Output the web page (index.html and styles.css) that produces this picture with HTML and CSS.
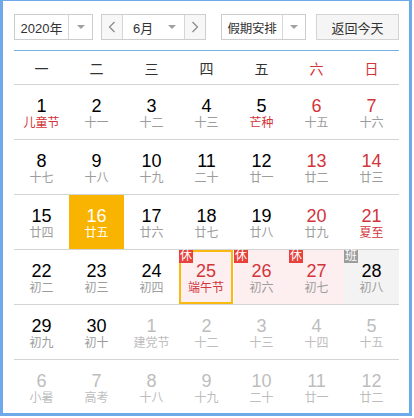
FILE: index.html
```html
<!DOCTYPE html>
<html lang="zh-CN">
<head>
<meta charset="utf-8">
<title>万年历</title>
<link rel="stylesheet" href="styles.css">
</head>
<body>
<div class="cal">
  <div class="toolbar">
    <div class="sel sel-year">
      <span class="sel-text">2020年</span>
      <span class="sel-arrow"><i class="tri"></i></span>
    </div>
    <div class="sel sel-month">
      <span class="nav"><svg width="8" height="12" viewBox="0 0 8 12"><path d="M6.5 1 L1.5 6 L6.5 11" fill="none" stroke="#888" stroke-width="1.2"/></svg></span>
      <span class="month-mid"><span class="month-text">6月</span><i class="tri"></i></span>
      <span class="nav nav-next"><svg width="8" height="12" viewBox="0 0 8 12"><path d="M1.5 1 L6.5 6 L1.5 11" fill="none" stroke="#888" stroke-width="1.2"/></svg></span>
    </div>
    <div class="sel sel-holiday">
      <span class="sel-text">假期安排</span>
      <span class="sel-arrow"><i class="tri"></i></span>
    </div>
    <div class="btn-today">返回今天</div>
  </div>

  <div class="head">
    <span>一</span><span>二</span><span>三</span><span>四</span><span>五</span><span class="red">六</span><span class="red">日</span>
  </div>

  <div class="week">
    <div class="cell"><b>1</b><em class="red">儿童节</em></div>
    <div class="cell"><b>2</b><em>十一</em></div>
    <div class="cell"><b>3</b><em>十二</em></div>
    <div class="cell"><b>4</b><em>十三</em></div>
    <div class="cell"><b>5</b><em class="red">芒种</em></div>
    <div class="cell"><b class="red">6</b><em>十五</em></div>
    <div class="cell"><b class="red">7</b><em>十六</em></div>
  </div>
  <div class="week">
    <div class="cell"><b>8</b><em>十七</em></div>
    <div class="cell"><b>9</b><em>十八</em></div>
    <div class="cell"><b>10</b><em>十九</em></div>
    <div class="cell"><b>11</b><em>二十</em></div>
    <div class="cell"><b>12</b><em>廿一</em></div>
    <div class="cell"><b class="red">13</b><em>廿二</em></div>
    <div class="cell"><b class="red">14</b><em>廿三</em></div>
  </div>
  <div class="week">
    <div class="cell"><b>15</b><em>廿四</em></div>
    <div class="cell today"><b>16</b><em>廿五</em></div>
    <div class="cell"><b>17</b><em>廿六</em></div>
    <div class="cell"><b>18</b><em>廿七</em></div>
    <div class="cell"><b>19</b><em>廿八</em></div>
    <div class="cell"><b class="red">20</b><em>廿九</em></div>
    <div class="cell"><b class="red">21</b><em class="red">夏至</em></div>
  </div>
  <div class="week">
    <div class="cell"><b>22</b><em>初二</em></div>
    <div class="cell"><b>23</b><em>初三</em></div>
    <div class="cell"><b>24</b><em>初四</em></div>
    <div class="cell rest festival"><span class="badge">休</span><b class="red">25</b><em class="red">端午节</em></div>
    <div class="cell rest"><span class="badge">休</span><b class="red">26</b><em>初六</em></div>
    <div class="cell rest"><span class="badge">休</span><b class="red">27</b><em>初七</em></div>
    <div class="cell work"><span class="badge badge-work">班</span><b>28</b><em>初八</em></div>
  </div>
  <div class="week">
    <div class="cell"><b>29</b><em>初九</em></div>
    <div class="cell"><b>30</b><em>初十</em></div>
    <div class="cell other"><b>1</b><em>建党节</em></div>
    <div class="cell other"><b>2</b><em>十二</em></div>
    <div class="cell other"><b>3</b><em>十三</em></div>
    <div class="cell other"><b>4</b><em>十四</em></div>
    <div class="cell other"><b>5</b><em>十五</em></div>
  </div>
  <div class="week last">
    <div class="cell other"><b>6</b><em>小暑</em></div>
    <div class="cell other"><b>7</b><em>高考</em></div>
    <div class="cell other"><b>8</b><em>十八</em></div>
    <div class="cell other"><b>9</b><em>十九</em></div>
    <div class="cell other"><b>10</b><em>二十</em></div>
    <div class="cell other"><b>11</b><em>廿一</em></div>
    <div class="cell other"><b>12</b><em>廿二</em></div>
  </div>
</div>
</body>
</html>
```

FILE: styles.css
```css
* { box-sizing: border-box; }
html, body { margin: 0; padding: 0; background: #fff; }
body {
  font-family: "Liberation Sans", "Noto Sans CJK SC", sans-serif;
  color: #000;
}
.cal {
  width: 412px;
  height: 416px;
  border: 3px solid #6ea9e9;
  border-top-width: 1px;
  padding: 13px 10px 0 11px;
}
.toolbar {
  display: flex;
  align-items: stretch;
  height: 26px;
  margin-bottom: 10px;
}
.sel {
  display: flex;
  border: 1px solid #cdcdcd;
  background: #fff;
  font-size: 13px;
  color: #333;
}
.sel-year { width: 79px; }
.sel-text {
  display: flex;
  align-items: center;
  justify-content: center;
  flex: 1;
  border-right: 1px solid #d6d6d6;
  white-space: nowrap;
}
.sel-arrow {
  display: flex;
  align-items: center;
  justify-content: center;
  width: 23px;
}
.tri {
  display: block;
  width: 0;
  height: 0;
  border-left: 4px solid transparent;
  border-right: 4px solid transparent;
  border-top: 4px solid #a0a0a0;
}
.sel-month { width: 105px; margin-left: 8px; }
.nav {
  display: flex;
  align-items: center;
  justify-content: center;
  width: 21px;
  background: #f7f7f7;
  border-right: 1px solid #d6d6d6;
}
.nav-next { border-right: none; border-left: 1px solid #d6d6d6; }
.month-mid {
  display: flex;
  align-items: center;
  flex: 1;
  padding-left: 10px;
}
.month-text { width: 35px; }
.sel-holiday { width: 85px; margin-left: 15px; }
.sel-holiday .sel-text { font-size: 12.5px; letter-spacing: -0.2px; }
.sel-holiday .sel-arrow { width: 22px; }
.btn-today {
  display: flex;
  align-items: center;
  justify-content: center;
  width: 83px;
  margin-left: 10px;
  border: 1px solid #d4d4d4;
  background: #f5f5f5;
  font-size: 13px;
  color: #333;
}
.head {
  display: grid;
  grid-template-columns: repeat(7, 55px);
  height: 35px;
  border-top: 1px solid #78b0ea;
  border-bottom: 1px solid #d4d4d4;
  font-size: 14px;
  color: #333;
}
.head span {
  display: flex;
  align-items: center;
  justify-content: center;
}
.red { color: #d3343b !important; }
.week {
  display: grid;
  grid-template-columns: repeat(7, 55px);
  height: 55px;
  border-bottom: 1px solid #d4d4d4;
}
.week.last { border-bottom: none; }
.cell {
  position: relative;
  display: flex;
  flex-direction: column;
  align-items: center;
  padding-top: 11px;
}
.cell b {
  font-weight: normal;
  font-size: 18px;
  line-height: 20px;
  color: #000;
}
.cell em {
  font-style: normal;
  font-size: 12px;
  line-height: 14px;
  color: #9c9c9c;
}
.cell.today { background: #f9b402; }
.cell.today b, .cell.today em { color: #fff; }
.cell.rest { background: #fdeff0; }
.cell.work { background: #f3f3f3; }
.cell.festival {
  border: 2px solid #f9b90f;
  padding-top: 9px;
  width: 54px;
}
.badge {
  position: absolute;
  left: 0;
  top: 0;
  width: 14px;
  height: 13px;
  background: #e8403a;
  color: #fff;
  font-size: 12px;
  line-height: 13px;
  text-align: center;
}
.festival .badge { left: -2px; top: -2px; }
.badge-work { background: #9d9d9d; }
.cell.other b, .cell.other em { color: #bdbdbd; }
```
